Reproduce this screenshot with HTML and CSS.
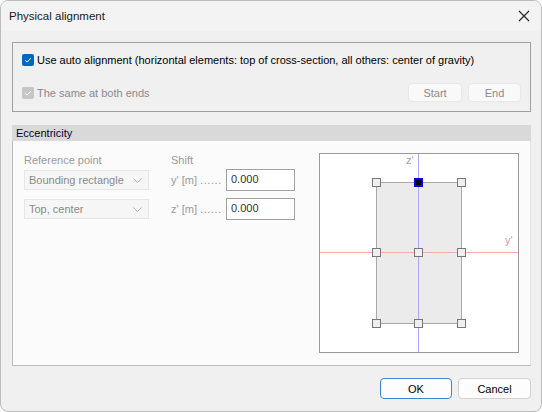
FILE: index.html
```html
<!DOCTYPE html>
<html>
<head>
<meta charset="utf-8">
<link rel="stylesheet" href="styles.css">
</head>
<body>
<div class="dialog">
  <div class="titlebar">
    <span class="title">Physical alignment</span>
    <svg class="close" width="12" height="12" viewBox="0 0 12 12"><path d="M1 1 L11 11 M11 1 L1 11" stroke="#222" stroke-width="1.1" fill="none"/></svg>
  </div>
  <div class="content">
    <div class="group">
      <div class="row">
        <span class="cb on"><svg width="12" height="12" viewBox="0 0 12 12"><path d="M3.2 6.3 L5.1 8.1 L8.8 4.2" stroke="#fff" stroke-width="1" fill="none"/></svg></span>
        <span class="label">Use auto alignment (horizontal elements: top of cross-section, all others: center of gravity)</span>
      </div>
      <div class="row row2">
        <span class="cb dis"><svg width="12" height="12" viewBox="0 0 12 12"><path d="M3.2 6.3 L5.1 8.1 L8.8 4.2" stroke="#fff" stroke-width="1" fill="none"/></svg></span>
        <span class="label muted">The same at both ends</span>
        <span class="spacer"></span>
        <span class="btn dbtn">Start</span>
        <span class="btn dbtn">End</span>
      </div>
    </div>
    <div class="ecc-head">Eccentricity</div>
    <div class="ecc">
      <div class="col-ref">
        <div class="cap">Reference point</div>
        <div class="combo"><span>Bounding rectangle</span><svg width="9" height="5" viewBox="0 0 9 5"><path d="M0.5 0.5 L4.5 4.5 L8.5 0.5" stroke="#b5b5b5" fill="none"/></svg></div>
        <div class="combo"><span>Top, center</span><svg width="9" height="5" viewBox="0 0 9 5"><path d="M0.5 0.5 L4.5 4.5 L8.5 0.5" stroke="#b5b5b5" fill="none"/></svg></div>
      </div>
      <div class="col-shift">
        <div class="cap">Shift</div>
        <div class="frow"><span class="fl">y' [m] <span class="dots">......</span></span><span class="input">0.000</span></div>
        <div class="frow"><span class="fl">z' [m] <span class="dots">......</span></span><span class="input">0.000</span></div>
      </div>
      <div class="diagram">
        <svg width="200" height="200" viewBox="0 0 200 200">
          <rect x="0.5" y="0.5" width="199" height="199" fill="#fff" stroke="#999"/>
          <rect x="57.5" y="29.5" width="85" height="141" fill="#ebebeb" stroke="#a8a8a8"/>
          <line x1="99.5" y1="1" x2="99.5" y2="199" stroke="#a8a8ff"/>
          <line x1="1" y1="99.5" x2="199" y2="99.5" stroke="#ffaaaa"/>
          <text x="87" y="11" class="ax z">z'</text>
          <text x="186" y="91" class="ax y">y'</text>
          <g fill="#efefef" stroke="#777">
            <rect x="53.5" y="25.5" width="8" height="8"/>
            <rect x="138.5" y="25.5" width="8" height="8"/>
            <rect x="53.5" y="95.5" width="8" height="8"/>
            <rect x="95.5" y="95.5" width="8" height="8"/>
            <rect x="138.5" y="95.5" width="8" height="8"/>
            <rect x="53.5" y="166.5" width="8" height="8"/>
            <rect x="95.5" y="166.5" width="8" height="8"/>
            <rect x="138.5" y="166.5" width="8" height="8"/>
          </g>
          <rect x="95.5" y="25.5" width="8" height="8" fill="#000" stroke="#0000ee"/>
          <rect x="96.5" y="26.5" width="6" height="6" fill="none" stroke="#0000ee" stroke-width="1"/>
        </svg>
      </div>
    </div>
    <div class="footer">
      <span class="btn ok">OK</span>
      <span class="btn cancel">Cancel</span>
    </div>
  </div>
</div>
</body>
</html>
```
FILE: styles.css
```css
html, body { margin: 0; padding: 0; background: #fff; }
body { font-family: "Liberation Sans", Arial, sans-serif; font-size: 11px; color: #000; }
.dialog {
  width: 542px; height: 412px; box-sizing: border-box;
  border: 1px solid #bdbdbd; border-radius: 8px; overflow: hidden;
  background: #f0f0f0; display: flex; flex-direction: column;
}
.titlebar {
  height: 30px; background: #f3f3f3; display: flex; align-items: center;
  padding: 0 11px 1px 8px; flex: none; box-sizing: border-box;
}
.title { flex: 1; font-size: 11.5px; color: #1a1a1a; }
.content { padding: 11px 10px 0 11px; display: flex; flex-direction: column; }
.group {
  height: 70px; box-sizing: border-box; border: 1px solid #a0a0a0;
  padding: 10px 9px 0 9px; display: flex; flex-direction: column;
}
.row { display: flex; align-items: center; height: 13px; }
.row2 { margin-top: 17px; height: 19px; }
.cb {
  width: 12px; height: 12px; border-radius: 2px; flex: none; display: flex;
  margin-right: 3px;
}
.cb.on { background: #0067c0; }
.cb.dis { background: #c6c6c6; }
.label { white-space: nowrap; }
.muted { color: #8a8a8a; }
.spacer { flex: 1; }
.btn {
  display: flex; align-items: center; justify-content: center;
  box-sizing: border-box; border: 1px solid #d2d2d2; border-radius: 4px;
  background: #fdfdfd;
}
.dbtn { width: 54px; height: 19px; color: #8a8a8a; border-color: #e8e8e8; background: #f9f9f9; margin-left: 6px; }
.dbtn:last-child { width: 53px; }
.ecc-head {
  margin-top: 13px; height: 16px; background: #d9d9d9; padding-left: 4px;
  line-height: 16px; color: #00003a; width: 519px; box-sizing: border-box;
}
.ecc {
  height: 225px; width: 519px; box-sizing: border-box; background: #fbfbfb;
  border-left: 1px solid #bcbcbc; border-bottom: 1px solid #bcbcbc; border-right: 1px solid #e3e3e3;
  display: flex; padding: 12px 0 0 11px;
}
.cap { color: #9a9a9a; height: 16px; line-height: 14px; }
.col-ref { width: 147px; display: flex; flex-direction: column; }
.combo {
  width: 125px; height: 20px; box-sizing: border-box; border: 1px solid #e6e6e6;
  background: #f6f6f6; display: flex; align-items: center; justify-content: space-between;
  padding: 0 6px 0 4px; color: #8a8a8a; margin-bottom: 9px;
}
.combo:nth-child(2) { margin-top: 1px; }
.col-shift { width: 148px; display: flex; flex-direction: column; }
.frow { display: flex; align-items: center; height: 22px; margin-bottom: 7px; }
.fl { width: 55px; color: #9a9a9a; white-space: nowrap; }
.dots { letter-spacing: 0.6px; }
.input {
  width: 69px; height: 22px; box-sizing: border-box; border: 1px solid #a0a0a0;
  background: #fff; padding: 0 4px; line-height: 18px; color: #333;
}
.diagram { width: 200px; height: 200px; }
.diagram svg { display: block; }
.ax { font-size: 11px; font-family: "Liberation Sans", Arial, sans-serif; }
.ax.z { fill: #9a9ad0; }
.ax.y { fill: #e09a9a; }
.footer { display: flex; justify-content: flex-end; margin-top: 12px; gap: 6px; }
.footer .btn { width: 72px; height: 21px; }
.footer .btn.cancel { width: 73px; }
.footer .ok { border-color: #3b86d6; }
```
